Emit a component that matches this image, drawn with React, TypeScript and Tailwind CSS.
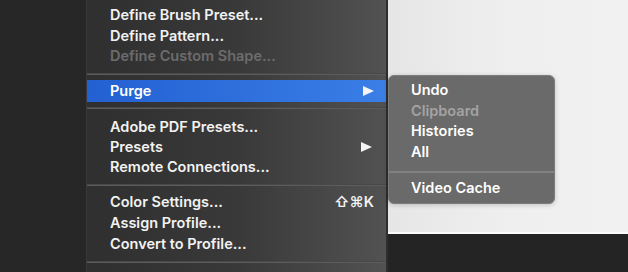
const font = { fontFamily: 'Inter, "Noto Sans", sans-serif' }

function Row({
  label,
  disabled,
  arrow,
  shortcut,
  h,
}: {
  label: string
  disabled?: boolean
  arrow?: boolean
  shortcut?: string
  h: string
}) {
  return (
    <div className={`flex items-center pl-[23px] pr-[14px] ${h}`}>
      <span
        className={`flex-1 text-[14.5px] font-semibold ${
          disabled ? 'text-[#6c6c6c]' : 'text-[#f2f2f2]'
        }`}
      >
        {label}
      </span>
      {arrow && <Arrow />}
      {shortcut && (
        <span className="text-[14.5px] font-semibold text-[#f2f2f2] -mr-[2px]">{shortcut}</span>
      )}
    </div>
  )
}

function Arrow() {
  return (
    <svg width="11" height="10" viewBox="0 0 11 10" className="shrink-0">
      <path d="M0 0 L11 5 L0 10 Z" fill="#f4f4f4" />
    </svg>
  )
}

function Sep({ pt, pb }: { pt: string; pb: string }) {
  return (
    <div className={`${pt} ${pb}`}>
      <div className="h-[2px] bg-[#5c5c5c] border-t border-[#484848]" />
    </div>
  )
}

export default function App() {
  return (
    <div className="flex w-[628px] h-[272px] overflow-hidden bg-[#262626]" style={font}>
      <div className="w-[86px] shrink-0 bg-[#272727]" />

      <div className="w-[302px] shrink-0 flex flex-col bg-gradient-to-r from-[#2f2f2f] via-[#393939] to-[#525252] border-l border-[#3a3a3a] border-r-2 border-r-[#2e2e2e]">
        <div className="pt-[5px]">
          <Row h="h-[20.5px]" label="Define Brush Preset..." />
          <Row h="h-[20.5px]" label="Define Pattern..." />
          <Row h="h-[20.5px]" label="Define Custom Shape..." disabled />
        </div>
        <Sep pt="pt-[6px]" pb="pb-[5.5px]" />
        <div className="h-[22px] flex items-center pl-[23px] pr-[12px] bg-gradient-to-r from-[#2360d2] to-[#3a7ee6]">
          <span className="flex-1 text-[14.5px] font-semibold text-white">Purge</span>
          <Arrow />
        </div>
        <Sep pt="pt-[5px]" pb="pb-[8px]" />
        <Row h="h-[20px]" label="Adobe PDF Presets..." />
        <Row h="h-[20px]" label="Presets" arrow />
        <Row h="h-[20px]" label="Remote Connections..." />
        <Sep pt="pt-[7px]" pb="pb-[5px]" />
        <Row h="h-[21px]" label="Color Settings..." shortcut="⇧⌘K" />
        <Row h="h-[21px]" label="Assign Profile..." />
        <Row h="h-[21px]" label="Convert to Profile..." />
        <Sep pt="pt-[7px]" pb="pb-0" />
      </div>

      <div className="flex-1 flex flex-col">
        <div className="relative h-[234px] bg-gradient-to-r from-[#e6e6e6] via-[#efefef] to-[#f1f1f1] border-b-2 border-[#fafafa]">
          <div className="absolute left-0 top-[75px] w-[167px] h-[129px] rounded-[6px] bg-[#6a6a6a] border border-[#7c7c7c] shadow-[0_1px_5px_rgba(0,0,0,0.2)] pt-[4px]">
            <div className="pl-[22px]">
              <div className="h-[20.5px] flex items-center text-[14.5px] font-semibold text-white">Undo</div>
              <div className="h-[20.5px] flex items-center text-[14.5px] font-semibold text-[#a3a3a3]">Clipboard</div>
              <div className="h-[20.5px] flex items-center text-[14.5px] font-semibold text-white">Histories</div>
              <div className="h-[20.5px] flex items-center text-[14.5px] font-semibold text-white">All</div>
            </div>
            <div className="pt-[9px] pb-[5px]">
              <div className="h-[2px] bg-[#828282]" />
            </div>
            <div className="pl-[22px] h-[20px] flex items-center text-[14.5px] font-semibold text-white">Video Cache</div>
          </div>
        </div>
        <div className="flex-1 bg-[#242424]" />
      </div>
    </div>
  )
}
